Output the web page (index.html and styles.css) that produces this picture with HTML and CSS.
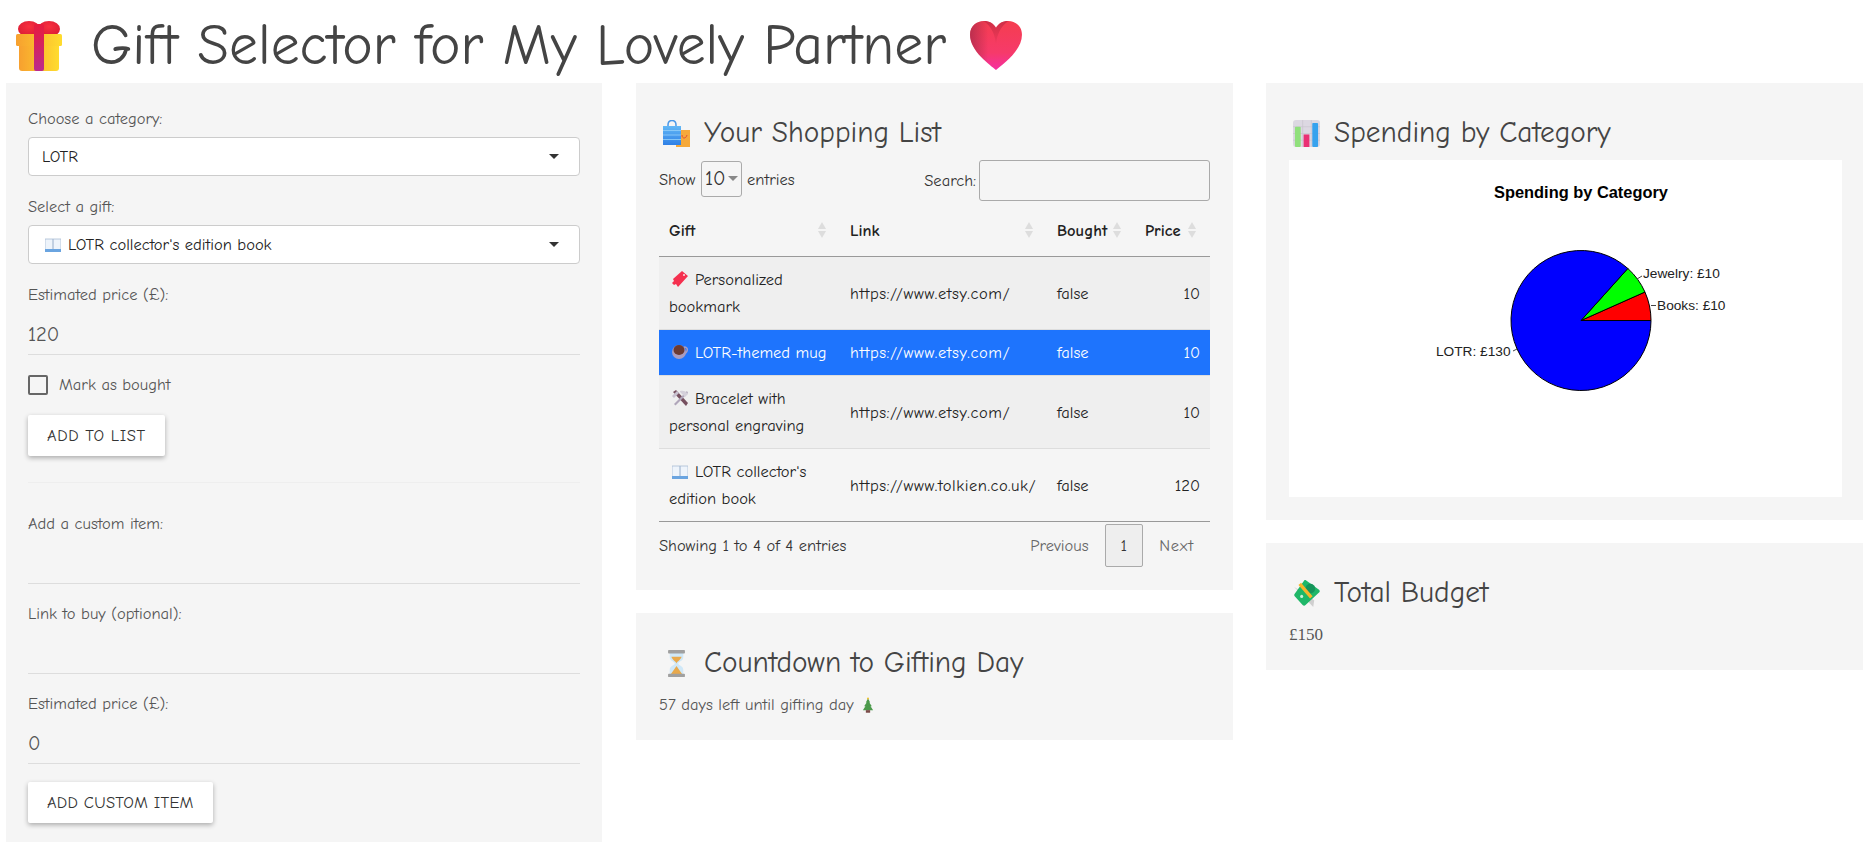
FILE: index.html
```html
<!DOCTYPE html>
<html>
  <head>
    <title>Gift Selector</title>
    <link rel="stylesheet" href="styles.css">
  </head>
  <body>
    <svg class="defs" width="0" height="0">
      <defs>
        <linearGradient id="boxGrad" x1="0" x2="1" y1="0" y2="0"><stop offset="0" stop-color="#f7a02f"/><stop offset="1" stop-color="#ffdc2e"/></linearGradient>
        <linearGradient id="ribbonGrad" x1="0" x2="0" y1="0" y2="1"><stop offset="0" stop-color="#e81c3c"/><stop offset="1" stop-color="#bb2a8e"/></linearGradient>
        <radialGradient id="bowGrad" cx=".5" cy=".35" r=".7"><stop offset="0" stop-color="#f8303f"/><stop offset="1" stop-color="#d81a34"/></radialGradient>
        <linearGradient id="heartGrad" x1="0" x2="0" y1="0" y2="1"><stop offset="0" stop-color="#f53d4f"/><stop offset=".65" stop-color="#f63a6a"/><stop offset="1" stop-color="#f52fa2"/></linearGradient>
        <linearGradient id="heartSide" x1="0" x2="1" y1="0" y2="0"><stop offset="0" stop-color="#a82a4a" stop-opacity=".75"/><stop offset=".35" stop-color="#a82a4a" stop-opacity="0"/></linearGradient>
        <linearGradient id="heartCrease" x1="0" x2="0" y1="0" y2="1"><stop offset="0" stop-color="#c42a45" stop-opacity=".8"/><stop offset="1" stop-color="#c42a45" stop-opacity="0"/></linearGradient>
        <linearGradient id="bagGrad" x1="0" x2="0" y1="0" y2="1"><stop offset="0" stop-color="#62b8f6"/><stop offset="1" stop-color="#2f80e6"/></linearGradient>
        <symbol id="ico-gift" viewBox="0 0 46 50">
          <ellipse cx="13" cy="8" rx="11" ry="8" fill="url(#bowGrad)"/>
          <ellipse cx="33" cy="8" rx="11" ry="8" fill="url(#bowGrad)"/>
          <rect x="3" y="18" width="40" height="32" rx="3" fill="url(#boxGrad)"/>
          <rect x="0" y="13" width="46" height="12" rx="1.5" fill="url(#boxGrad)"/>
          <rect x="18" y="3" width="10" height="47" rx="2" fill="url(#ribbonGrad)"/>
        </symbol>
        <symbol id="ico-heart" viewBox="0 0 53 50">
          <path d="M26.500 50C21 45 0 31 0 14 0 5 7 0 14 0c6 0 10 2.500 12.500 7C29 2.500 33 0 39 0c7 0 14 5 14 14 0 17-21 31-26.500 36z" fill="url(#heartGrad)"/>
          <path d="M26.500 50C21 45 0 31 0 14 0 5 7 0 14 0c6 0 10 2.500 12.500 7C29 2.500 33 0 39 0c7 0 14 5 14 14 0 17-21 31-26.500 36z" fill="url(#heartSide)"/>
          <path d="M26.500 7C24 2.500 20 0 14 0c8 6 12 14 12.500 26C27 14 31 6 39 0c-6 0-10 2.500-12.500 7z" fill="url(#heartCrease)"/>
        </symbol>
        <symbol id="ico-bags" viewBox="0 0 27 27">
          <rect x="13" y="10" width="14" height="17" fill="#f6a93a"/>
          <path d="M19 15c0 4 4 4 5 0" stroke="#e2503a" fill="none"/>
          <path d="M5 7V5c0-6 8-6 8 0v2" stroke="#4a98e8" stroke-width="1.500" fill="none"/>
          <rect x="0" y="6" width="18" height="19" fill="url(#bagGrad)"/>
          <path d="M0 10.500h18M0 15h18M0 19.500h18" stroke="#8ccbf8" stroke-width=".9"/>
        </symbol>
        <symbol id="ico-chart" viewBox="0 0 28 28">
          <rect width="28" height="28" rx="3" fill="#dcd8e2"/>
          <path d="M10 0v28M19 0v28M0 7h28M0 14h28M0 21h28" stroke="#c8c4ce" stroke-width=".7"/>
          <rect x="2" y="7" width="6" height="21" rx="1" fill="#90e07c"/>
          <rect x="11" y="15" width="6" height="13" fill="#ea3074"/>
          <rect x="20" y="3" width="6" height="25" rx="1" fill="#36a2ee"/>
        </symbol>
        <symbol id="ico-money" viewBox="0 0 28 28">
          <path d="M1 7l20 21 1-7z" fill="#cfcfcf"/>
          <path d="M13 0l14 10c1 1 1 2 0 3L13 26c-1 1-2 1-3 0L2 17c-1-1-1-2 0-3L12 0z" fill="#1fb768"/>
          <circle cx="18" cy="9" r="5" fill="#14955a"/>
          <path d="M7 4l12 14" stroke="#f8b52a" stroke-width="3.500"/>
          <circle cx="9" cy="17" r="1.600" fill="#c8f2d8"/>
        </symbol>
        <symbol id="ico-hourglass" viewBox="0 0 24 32">
          <path d="M4 3h16v6c0 4-6 5-6 7s6 3 6 7v6H4v-6c0-4 6-5 6-7s-6-3-6-7z" fill="#cfe8f8"/>
          <path d="M6 8h12c-1 4-5 5-6 8-1-3-5-4-6-8zM12 19l7 10H5z" fill="#e8a94c"/>
          <rect x="2" y="0" width="20" height="4" rx="1" fill="#a0a0a0"/>
          <rect x="2" y="28" width="20" height="4" rx="1" fill="#a0a0a0"/>
        </symbol>
        <symbol id="ico-tree" viewBox="0 0 14 18">
          <path d="M7 1l2.500 5H8.500l3 4.500h-1.500L13 15H1l3-4.500H2.500l3-4.500H4.500z" fill="#4c9a4c"/>
          <circle cx="7" cy="1.500" r="1.200" fill="#f2c230"/>
          <rect x="4.500" y="15" width="5" height="3" fill="#7a4a48"/>
        </symbol>
        <symbol id="ico-tag" viewBox="0 0 16 16">
          <path d="M10 0l6 5L6 16l-2-3-2 1-2-2 2-2-1-2z" fill="#f5304f"/>
          <circle cx="12" cy="4" r="1" fill="#fbe0e4"/>
        </symbol>
        <symbol id="ico-mug" viewBox="0 0 16 16">
          <path d="M12 3c5 0 4 6-1 7" stroke="#a99cc0" stroke-width="1.500" fill="none"/>
          <circle cx="7" cy="8" r="7" fill="#a99cc0"/>
          <ellipse cx="7" cy="6" rx="5.500" ry="5" fill="#6b3a32"/>
        </symbol>
        <symbol id="ico-tools" viewBox="0 0 16 16">
          <path d="M1 2l3-2 12 13-2 3z" fill="#76505f"/>
          <path d="M15 1L2 14l1.500 1.500L16 3z" fill="#b0a6ba"/>
          <path d="M8 1c3-1 6 0 8 3l-3 3-5-5z" fill="#d4d0da"/>
          <path d="M0 6l5-5 2 2-5 5z" fill="#c8c2d0"/>
        </symbol>
        <symbol id="ico-book" viewBox="0 0 16 16">
          <path d="M0 3h8v11H0zM8 3h8v11H8z" fill="#eef4fb" stroke="#a8bcd4" stroke-width=".8"/>
          <rect x="0" y="13" width="16" height="3" fill="#6aa4e0"/>
        </symbol>
      </defs>
    </svg>

    <h1 class="page-title">
      <svg class="title-ico"><use href="#ico-gift"/></svg>
      <span>Gift Selector for My Lovely Partner</span>
      <svg class="title-ico heart"><use href="#ico-heart"/></svg>
    </h1>

    <div class="columns">
      <div class="panel panel-form">
        <div class="field">
          <label>Choose a category:</label>
          <div class="picker"><span>LOTR</span><i class="caret"></i></div>
        </div>
        <div class="field">
          <label>Select a gift:</label>
          <div class="picker">
            <span><svg class="row-ico"><use href="#ico-book"/></svg>LOTR collector's edition book</span>
            <i class="caret"></i>
          </div>
        </div>
        <div class="field">
          <label>Estimated price (£):</label>
          <div class="line-input">120</div>
        </div>
        <div class="check-row"><span class="check"></span><span>Mark as bought</span></div>
        <button class="btn">ADD TO LIST</button>
        <hr class="divider">
        <div class="field field-custom">
          <label>Add a custom item:</label>
          <div class="line-input"></div>
        </div>
        <div class="field field-custom">
          <label>Link to buy (optional):</label>
          <div class="line-input"></div>
        </div>
        <div class="field field-custom">
          <label>Estimated price (£):</label>
          <div class="line-input">0</div>
        </div>
        <button class="btn btn-custom">ADD CUSTOM ITEM</button>
      </div>

      <div class="stack">
        <div class="panel">
          <h2><svg class="head-ico"><use href="#ico-bags"/></svg>Your Shopping List</h2>
          <div class="dt-top">
            <div class="dt-length">Show <span class="dt-select">10<i class="caret caret-grey"></i></span> entries</div>
            <div class="dt-search">Search:<span class="dt-input"></span></div>
          </div>
          <table class="dt">
            <colgroup>
              <col class="col-gift"><col class="col-link"><col class="col-bought"><col class="col-price">
            </colgroup>
            <thead>
              <tr>
                <th>Gift<i class="sort"></i></th>
                <th>Link<i class="sort"></i></th>
                <th>Bought<i class="sort"></i></th>
                <th class="num">Price<i class="sort"></i></th>
              </tr>
            </thead>
            <tbody>
              <tr class="odd">
                <td><svg class="row-ico"><use href="#ico-tag"/></svg>Personalized bookmark</td>
                <td class="url">https://www.etsy.com/</td>
                <td>false</td>
                <td class="num">10</td>
              </tr>
              <tr class="selected">
                <td><svg class="row-ico"><use href="#ico-mug"/></svg>LOTR-themed mug</td>
                <td class="url">https://www.etsy.com/</td>
                <td>false</td>
                <td class="num">10</td>
              </tr>
              <tr class="odd">
                <td><svg class="row-ico"><use href="#ico-tools"/></svg>Bracelet with personal engraving</td>
                <td class="url">https://www.etsy.com/</td>
                <td>false</td>
                <td class="num">10</td>
              </tr>
              <tr>
                <td><svg class="row-ico"><use href="#ico-book"/></svg>LOTR collector's edition book</td>
                <td class="url">https://www.tolkien.co.uk/</td>
                <td>false</td>
                <td class="num">120</td>
              </tr>
            </tbody>
          </table>
          <div class="dt-bottom">
            <div>Showing 1 to 4 of 4 entries</div>
            <div class="pager"><span>Previous</span><span class="current">1</span><span>Next</span></div>
          </div>
        </div>
        <div class="panel panel-small">
          <h2><svg class="head-ico"><use href="#ico-hourglass"/></svg>Countdown to Gifting Day</h2>
          <p class="note">57 days left until gifting day <svg class="tree-ico"><use href="#ico-tree"/></svg></p>
        </div>
      </div>

      <div class="stack">
        <div class="panel panel-chart">
          <h2><svg class="head-ico"><use href="#ico-chart"/></svg>Spending by Category</h2>
          <div class="chart">
            <svg width="553" height="337" viewBox="0 0 553 337">
              <text class="chart-title" x="292" y="38" text-anchor="middle">Spending by Category</text>
              <g stroke="#000" stroke-width="1" transform="translate(-1 0)">
                <path d="M293 160.500L363 160.500A70 70 0 0 0 356.950 132.030Z" fill="#f00"/>
                <path d="M293 160.500L356.950 132.030A70 70 0 0 0 339.840 108.480Z" fill="#0f0"/>
                <path d="M293 160.500L339.840 108.480A70 70 0 1 0 363 160.500Z" fill="#00f"/>
              </g>
              <path d="M362 145.500L367 145.500M348 119L353 116M228 189L224 191" stroke="#444" stroke-width="1"/>
              <text class="chart-label" x="368" y="150">Books: £10</text>
              <text class="chart-label" x="354" y="118">Jewelry: £10</text>
              <text class="chart-label" x="221.500" y="196" text-anchor="end">LOTR: £130</text>
            </svg>
          </div>
        </div>
        <div class="panel panel-small">
          <h2><svg class="head-ico"><use href="#ico-money"/></svg>Total Budget</h2>
          <p class="note serif">£150</p>
        </div>
      </div>
    </div>
  </body>
</html>
```

FILE: styles.css
```css
html, body {
  margin: 0;
  height: 842px;
  overflow: hidden;
}
body {
  background: #fff;
  color: #555;
  font-family: "Comic Sans MS", "Comic Neue", cursive;
  font-size: 16.5px;
  line-height: 1.43;
}
.defs {
  display: block;
  height: 0;
}

.page-title {
  display: flex;
  align-items: center;
  box-sizing: border-box;
  height: 83px;
  margin: 0;
  padding: 8px 0 0 16px;
  font-size: 57.7px;
  font-weight: 400;
  color: #444;
}
.title-ico {
  width: 46px;
  height: 50px;
  margin-right: 29px;
}
.title-ico.heart {
  width: 52px;
  height: 49px;
  margin: 0 0 0 24px;
}

.columns {
  display: grid;
  grid-template-columns: repeat(3, 597px);
  column-gap: 33px;
  padding-left: 6px;
  align-items: start;
}
.stack {
  display: flex;
  flex-direction: column;
  gap: 23px;
}
.panel {
  background: #f5f5f5;
  padding: 27px 23px 23px;
}
.panel h2 {
  display: flex;
  align-items: center;
  height: 47px;
  margin: 0 0 3px;
  font-size: 29.4px;
  font-weight: 400;
  color: #444;
}
.head-ico {
  flex: none;
  width: 27px;
  height: 27px;
  margin: 0 14px 0 4px;
}

.panel-form {
  width: 596px;
  height: 759px;
  box-sizing: border-box;
  padding: 22px 22px 0;
}
.field label {
  display: block;
  height: 32px;
  line-height: 27px;
}
.field {
  margin-bottom: 17px;
}
.picker {
  display: flex;
  align-items: center;
  justify-content: space-between;
  height: 37px;
  padding: 0 20px 0 13px;
  background: #fff;
  border: 1px solid #ccc;
  border-radius: 4px;
  color: #222;
}
.caret {
  display: inline-block;
  width: 0;
  height: 0;
  border-left: 5px solid transparent;
  border-right: 5px solid transparent;
  border-top: 5px solid #333;
}
.caret-grey {
  margin-left: 2px;
  border-top-color: #888;
  vertical-align: 4px;
}
.line-input {
  height: 41px;
  line-height: 43px;
  font-size: 20.5px;
  border-bottom: 1px solid #ddd;
}
.check-row {
  display: flex;
  align-items: center;
  gap: 11px;
  height: 20px;
  margin-top: 20px;
}
.check {
  width: 16px;
  height: 16px;
  border: 2px solid #666;
  border-radius: 2px;
}
.btn {
  display: block;
  height: 41px;
  margin-top: 20px;
  padding: 0 19px;
  background: #fff;
  border: 0;
  border-radius: 2px;
  box-shadow: 0 2px 5px rgba(0, 0, 0, .3);
  font: inherit;
  letter-spacing: .6px;
  color: #333;
}
.divider {
  margin: 26px 0 0;
  border: 0;
  border-top: 1px solid #eee;
}
.field-custom {
  margin-bottom: 16px;
}
.divider + .field-custom {
  margin-top: 27px;
}
.btn-custom {
  margin-top: 18px;
  letter-spacing: .25px;
}

.dt-top {
  display: flex;
  justify-content: space-between;
  align-items: center;
  height: 41px;
  color: #333;
}
.dt-length {
  margin-bottom: 4px;
}
.dt-select {
  display: inline-block;
  padding: 2px 3px;
  border: 1px solid #aaa;
  border-radius: 3px;
  font-size: 20.5px;
  line-height: 30px;
}
.dt-search {
  display: flex;
  align-items: center;
  gap: 3px;
}
.dt-input {
  width: 229px;
  height: 39px;
  border: 1px solid #aaa;
  border-radius: 3px;
}
.dt {
  width: 100%;
  margin-top: 5px;
  border-collapse: collapse;
  table-layout: fixed;
  color: #222;
}
.col-gift { width: 181px; }
.col-link { width: 207px; }
.col-bought { width: 88px; }
.dt th {
  position: relative;
  height: 50px;
  padding: 0 10px;
  text-align: left;
  font-weight: 700;
  border-bottom: 1px solid #999;
}
.dt td {
  padding: 9px 10px;
  line-height: 27px;
  border-bottom: 1px solid #ddd;
}
.dt .url {
  letter-spacing: .55px;
  white-space: nowrap;
}
.dt .num {
  text-align: right;
}
.dt th.num {
  padding-right: 30px;
}
.dt tr.odd td {
  background: #efefef;
}
.dt tr.selected td {
  background: #1e74fd;
  color: #fff;
}
.dt tbody tr:last-child td {
  border-bottom-color: #999;
}
.sort {
  position: absolute;
  top: 16px;
  right: 14px;
  width: 0;
  height: 0;
  border-left: 4px solid transparent;
  border-right: 4px solid transparent;
  border-bottom: 7px solid #ddd;
}
.sort::after {
  content: "";
  position: absolute;
  top: 9px;
  left: -4px;
  border-left: 4px solid transparent;
  border-right: 4px solid transparent;
  border-top: 7px solid #ddd;
}
.row-ico {
  width: 16px;
  height: 16px;
  margin: 0 7px 0 3px;
  vertical-align: -2px;
}
.dt-bottom {
  display: flex;
  justify-content: space-between;
  align-items: center;
  margin-top: 2px;
  color: #333;
}
.pager {
  display: flex;
  align-items: center;
  color: #666;
}
.pager span {
  padding: 0 16px;
  line-height: 41px;
}
.pager span:last-child {
  letter-spacing: .8px;
}
.pager .current {
  padding: 0 15px;
  border: 1px solid #aaa;
  border-radius: 2px;
  background: #eee;
  color: #333;
}

.panel-small {
  padding-bottom: 24px;
}
.note {
  margin: 7px 0 0;
  line-height: 22px;
}
.note.serif {
  font-family: "Liberation Serif", serif;
  font-size: 17px;
}
.tree-ico {
  width: 12px;
  height: 16px;
  margin-left: 3px;
  vertical-align: -3px;
}

.panel-chart {
  padding-right: 21px;
}
.chart {
  background: #fff;
  height: 337px;
}
.chart svg {
  display: block;
}
.chart-title {
  font: 700 16.4px "Liberation Sans", sans-serif;
  fill: #000;
}
.chart-label {
  font: 13.7px "Liberation Sans", sans-serif;
  fill: #222;
}
```
